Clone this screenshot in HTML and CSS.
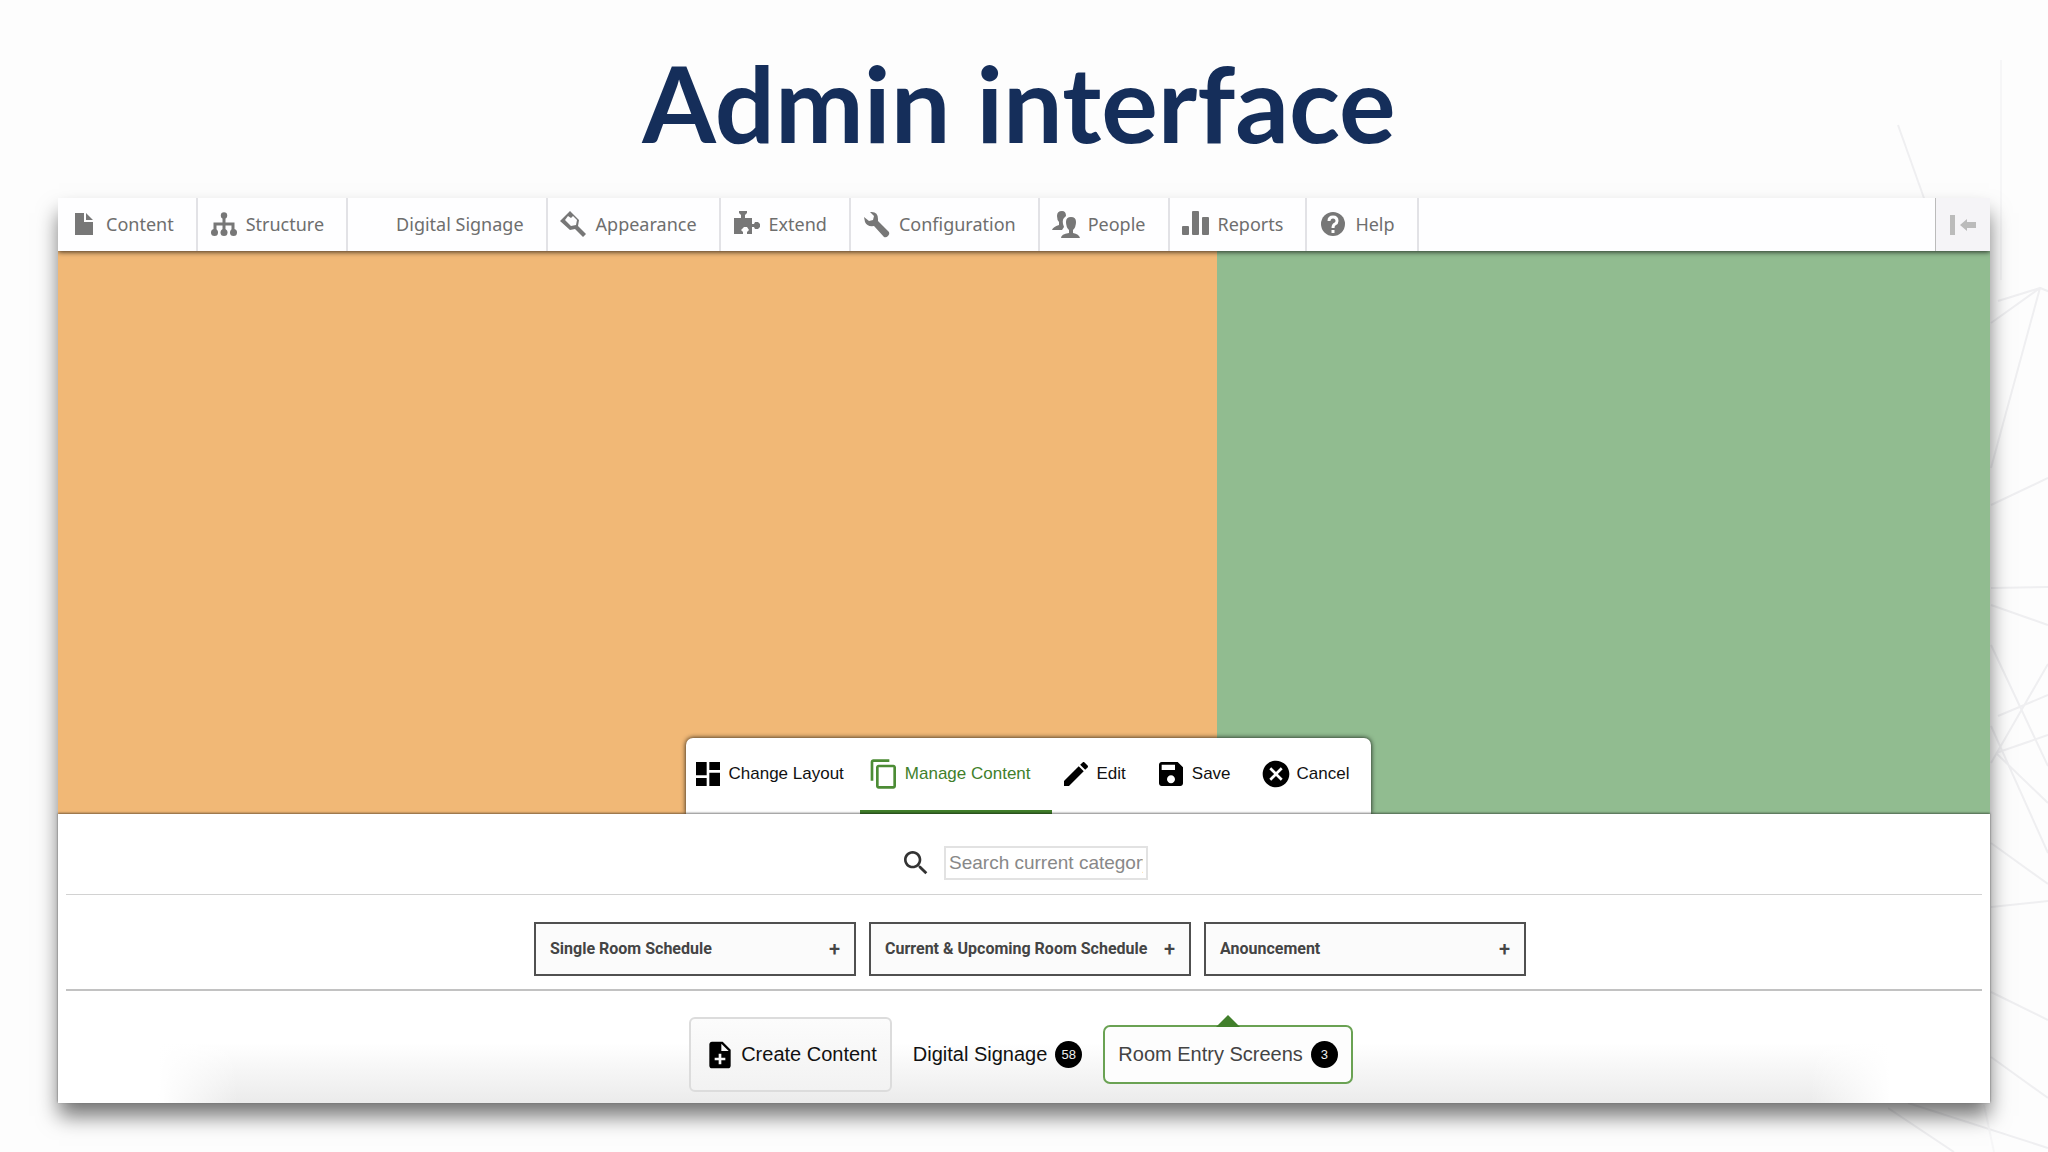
FILE: index.html
```html
<!DOCTYPE html>
<html lang="en">
<head>
<meta charset="utf-8">
<meta name="viewport" content="width=device-width, initial-scale=1">
<title>Admin interface</title>
<link rel="stylesheet" href="styles.css">
</head>
<body>
<svg class="network" viewBox="0 0 160 1152" aria-hidden="true">
  <path d="M110 301L152 288M103 323L152 288L162 292M103 468L152 288M103 505L160 478M103 588L160 587M103 605L160 625M103 645L160 766M103 726L160 853M108 753L160 803M108 753L160 735M110 716L160 695M103 763L160 664M103 843L160 884M103 907L160 901M103 992L160 1020M103 1057L160 1098M10 125L42 215M0 1108L66 1152M20 1103L160 1148"/>
  <path class="faint" d="M113 60V280M96 1105L106 1152"/>
</svg>
<h1 class="title">Admin interface</h1>
<main class="panel">
  <nav class="menu" aria-label="Administration">
    <a class="menu-item" href="#"><svg class="menu-icon" viewBox="0 0 28 28"><path d="M5 3h9v9h9v13H5zM16 3l7 7h-7z"/></svg>Content</a>
    <a class="menu-item" href="#"><svg class="menu-icon" viewBox="0 0 28 28"><path d="M12.500 7h3v5.500h9V20h-3v-4.500h-6V20h-3v-4.500h-6V20h-3v-7.500h9z"/><circle cx="14" cy="5.500" r="3.200"/><circle cx="4.500" cy="22.500" r="3.500"/><circle cx="14" cy="22.500" r="3.500"/><circle cx="23.500" cy="22.500" r="3.500"/></svg>Structure</a>
    <a class="menu-item" href="#"><span class="menu-icon"></span>Digital Signage</a>
    <a class="menu-item" href="#"><svg class="menu-icon" viewBox="0 0 28 28"><path fill-rule="evenodd" d="M10 1l9 9-1 6 8 8-3 3-8-8-5 1-10-9zM8 6l-3 4 6 6 5-1 1-5-4-4-2 2z"/></svg>Appearance</a>
    <a class="menu-item" href="#"><svg class="menu-icon" viewBox="0 0 28 28"><path d="M6 1h8v2l-2 2v3h7v6h2l1-2h3l2 2v3l-2 2h-3l-1-2h-2v7h-5v-2l2-2-2-3h-3l-3 3 2 2v2H1V8h7V5L6 3z"/></svg>Extend</a>
    <a class="menu-item" href="#"><svg class="menu-icon" viewBox="0 0 28 28"><path d="M7 2q8-1 8 7v2l11 11q1 2-1 4t-4 1L11 16q-7 1-9-4L1 7l5 4 4-1 1-4z"/></svg>Configuration</a>
    <a class="menu-item" href="#"><svg class="menu-icon" viewBox="0 0 28 28"><path d="M5 6q0-5 5-5 4 0 4 5l-1 1q-3 2-2 7l1 3-2 3H0q1-3 7-5v-3q-2-2-2-6z"/><path d="M14 12q0-5 5-5t5 5q0 5-3 8v3q6 1 7 5H9q0-4 8-5v-3q-3-3-3-8z"/></svg>People</a>
    <a class="menu-item" href="#"><svg class="menu-icon" viewBox="0 0 28 28"><rect y="16" width="7" height="9" rx="1"/><rect x="10" y="1" width="7" height="24" rx="1"/><rect x="20" y="7" width="7" height="18" rx="1"/></svg>Reports</a>
    <a class="menu-item" href="#"><svg class="menu-icon" viewBox="0 0 28 28"><circle cx="14" cy="14" r="12"/><path class="mark" d="M10 11q0-4 4-4t4 4q0 2-2 3t-2 4"/><path class="mark" d="M14 20v3"/></svg>Help</a>
    <button class="menu-toggle" type="button" aria-label="Vertical orientation"><svg class="menu-icon" viewBox="0 0 28 28"><path d="M1 4h5v20H1zM11 14l7-6v3h9v6h-9v3z"/></svg></button>
  </nav>

  <section class="canvas">
    <div class="tools">
      <button class="tool" type="button"><svg class="tool-icon" viewBox="0 0 24 24"><path d="M3 13h8V3H3v10zm0 8h8v-6H3v6zm10 0h8V11h-8v10zm0-18v6h8V3h-8z"/></svg>Change Layout</button>
      <button class="tool tool-active" type="button"><svg class="tool-icon" viewBox="0 0 24 24"><path d="M16 1H4c-1.100 0-2 .9-2 2v14h2V3h12V1zm3 4H8c-1.100 0-2 .9-2 2v14c0 1.100.9 2 2 2h11c1.100 0 2-.9 2-2V7c0-1.100-.9-2-2-2zm0 16H8V7h11v14z"/></svg>Manage Content</button>
      <button class="tool" type="button"><svg class="tool-icon" viewBox="0 0 24 24"><path d="M3 17.250V21h3.750L17.810 9.940l-3.750-3.750L3 17.250zM20.710 7.040c.39-.39.39-1.020 0-1.410l-2.340-2.340c-.39-.39-1.020-.39-1.410 0l-1.830 1.830 3.750 3.750 1.830-1.830z"/></svg>Edit</button>
      <button class="tool" type="button"><svg class="tool-icon" viewBox="0 0 24 24"><path d="M17 3H5c-1.110 0-2 .9-2 2v14c0 1.100.89 2 2 2h14c1.100 0 2-.9 2-2V7l-4-4zm-5 16c-1.660 0-3-1.340-3-3s1.340-3 3-3 3 1.340 3 3-1.340 3-3 3zm3-10H5V5h10v4z"/></svg>Save</button>
      <button class="tool" type="button"><svg class="tool-icon" viewBox="0 0 24 24"><path d="M12 2C6.470 2 2 6.470 2 12s4.470 10 10 10 10-4.470 10-10S17.530 2 12 2zm5 13.590L15.590 17 12 13.410 8.410 17 7 15.590 10.590 12 7 8.410 8.410 7 12 10.590 15.590 7 17 8.410 13.410 12 17 15.590z"/></svg>Cancel</button>
    </div>
  </section>

  <section class="dock">
    <div class="search">
      <label class="search-label" for="search" aria-label="Search"><svg class="tool-icon" viewBox="0 0 24 24"><path d="M15.500 14h-.79l-.28-.27C15.410 12.590 16 11.110 16 9.500 16 5.910 13.090 3 9.500 3S3 5.910 3 9.500 5.910 16 9.500 16c1.610 0 3.090-.59 4.230-1.570l.27.28v.79l5 4.990L20.490 19l-4.990-5zm-6 0C7.010 14 5 11.990 5 9.500S7.010 5 9.500 5 14 7.010 14 9.500 11.990 14 9.500 14z"/></svg></label>
      <input class="search-box" id="search" type="text" placeholder="Search current category">
    </div>
    <div class="cards">
      <button class="card" type="button">Single Room Schedule<span class="plus">+</span></button>
      <button class="card" type="button">Current &amp; Upcoming Room Schedule<span class="plus">+</span></button>
      <button class="card" type="button">Anouncement<span class="plus">+</span></button>
    </div>
    <div class="tabs">
      <button class="create" type="button"><svg class="tool-icon" viewBox="0 0 24 24"><path d="M14 2H6c-1.100 0-1.990.9-1.990 2L4 20c0 1.100.89 2 1.990 2H18c1.100 0 2-.9 2-2V8l-6-6zm2 14h-3v3h-2v-3H8v-2h3v-3h2v3h3v2zm-3-7V3.500L18.500 9H13z"/></svg>Create Content</button>
      <button class="tab" type="button">Digital Signage<span class="badge">58</span></button>
      <button class="tab tab-active" type="button">Room Entry Screens<span class="badge">3</span></button>
    </div>
  </section>
</main>
</body>
</html>
```

FILE: styles.css
```css
* { box-sizing: border-box; }

body {
  margin: 0;
  min-height: 100vh;
  display: flex;
  flex-direction: column;
  position: relative;
  padding: 0 58px 49px;
  background: #fdfdfd;
  font-family: "Liberation Sans", Arial, sans-serif;
  color: #111;
}

button {
  margin: 0;
  border: 0;
  background: none;
  font: inherit;
  color: inherit;
  cursor: pointer;
}

svg { fill: currentColor; flex: none; }

/* Faint mesh behind the right edge of the page */
.network {
  position: absolute;
  top: 0;
  right: 0;
  width: 160px;
  height: 1152px;
  fill: none;
  stroke: #efeff1;
  stroke-width: 2;
}

.faint { stroke: #f6f6f7; }

.title {
  margin: 0;
  padding: 38px 10px 32px 0;
  font: bold 106px/128px Lato, sans-serif;
  color: #152e5a;
  text-align: center;
}

.panel {
  flex: 1;
  display: flex;
  flex-direction: column;
  position: relative;
  background: #fff;
  box-shadow: 0 14px 20px -1px rgba(0, 0, 0, 0.55);
}

/* Administration menu */
.menu {
  z-index: 1;
  display: flex;
  height: 53px;
  position: relative;
  background: #fefeff;
  box-shadow: 0 1px 5px rgba(0, 0, 0, 0.75);
  clip-path: inset(0 0 -10px 0);
  font: 18px/24px "Noto Sans", sans-serif;
  color: #6e6e6e;
}

.menu-item {
  display: flex;
  align-items: center;
  gap: 8px;
  padding: 0 22px 2px 12px;
  border-right: 2px solid #e2e2e6;
  color: inherit;
  text-decoration: none;
}

.menu-icon { width: 28px; height: 28px; color: #777; }

.mark { fill: none; stroke: #fff; stroke-width: 3; }

.menu-toggle {
  margin-left: auto;
  padding: 0 13px;
  border-left: 1px solid #bbb;
  background: #f5f4f7;
  display: flex;
  align-items: center;
}

.menu-toggle .menu-icon { color: #bbb; }

/* Layout preview: two regions, 60 / 40 */
.canvas {
  flex: 1;
  display: flex;
  justify-content: center;
  align-items: flex-end;
  padding-left: 8px;
  background: linear-gradient(to right, #f1b876 60%, #91bc90 60%);
}

.tools {
  display: flex;
  height: 76px;
  background: #fff;
  border-radius: 7px 7px 0 0;
  box-shadow: 0 0 5px rgba(0, 0, 0, 0.9);
  font-size: 17px;
}

.tool {
  display: flex;
  align-items: center;
  gap: 5px;
  padding: 0 21px 0 8px;
  border-bottom: 4px solid transparent;
}

.tool:first-child { padding: 0 16px 0 6px; }

.tool-active { color: #417f2b; border-color: #417f2b; }

.tool-icon { width: 32px; height: 32px; color: #000; }

.tool-active .tool-icon { color: #4c8c35; }

/* Content picker */
.dock {
  position: relative;
  padding: 0 8px;
  background:
    linear-gradient(to right, #fff 100px, transparent 180px calc(100% - 180px), #fff calc(100% - 100px)),
    linear-gradient(to top, #ebebeb, #fff 60px);
  box-shadow: 0 -1px 2px rgba(0, 0, 0, 0.5);
}

.search {
  display: flex;
  justify-content: center;
  align-items: center;
  gap: 12px;
  padding: 32px 0 14px;
  border-bottom: 1px solid #d2d2d2;
}

.search-label { display: flex; }

.search-label .tool-icon { color: #333; }

.search-box {
  width: 204px;
  height: 34px;
  padding: 0 3px;
  border: 2px solid #e2e2e2;
  background: #fff;
  font: 19px/24px "Liberation Sans", Arial, sans-serif;
}

.search-box::placeholder { color: #888; }

.cards {
  display: flex;
  justify-content: center;
  gap: 13px;
  padding: 27px 0 13px 12px;
  border-bottom: 2px solid #c2c2c2;
}

.card {
  display: flex;
  justify-content: space-between;
  align-items: center;
  width: 322px;
  height: 54px;
  padding: 0 14px;
  border: 2px solid #505050;
  background: #fbfbfb;
  font: bold 16px/24px Roboto, sans-serif;
  color: #444;
}

.plus { font-size: 20px; font-weight: 500; }

.tabs {
  display: flex;
  justify-content: center;
  align-items: center;
  padding: 26px 6px 11px 0;
  font-size: 20px;
}

.create {
  display: flex;
  align-items: center;
  gap: 5px;
  height: 75px;
  padding: 0 13px;
  border: 2px solid #dcdcdc;
  border-radius: 6px;
  background: linear-gradient(#fcfcfc, #f2f2f2);
}

.tab {
  display: flex;
  align-items: center;
  gap: 8px;
  height: 59px;
  padding: 0 21px;
}

.tab-active {
  position: relative;
  padding: 0 13px;
  border: 2px solid #6aa253;
  border-radius: 7px;
  background: #fdfdfd;
  color: #444;
}

.tab-active::before {
  content: "";
  position: absolute;
  left: 50%;
  bottom: 100%;
  margin-left: -12px;
  border: 12px solid transparent;
  border-top: 0;
  border-bottom-color: #417f2b;
}

.badge {
  display: grid;
  place-items: center;
  width: 27px;
  height: 27px;
  border-radius: 50%;
  background: #000;
  color: #eee;
  font-size: 13px;
}
```
